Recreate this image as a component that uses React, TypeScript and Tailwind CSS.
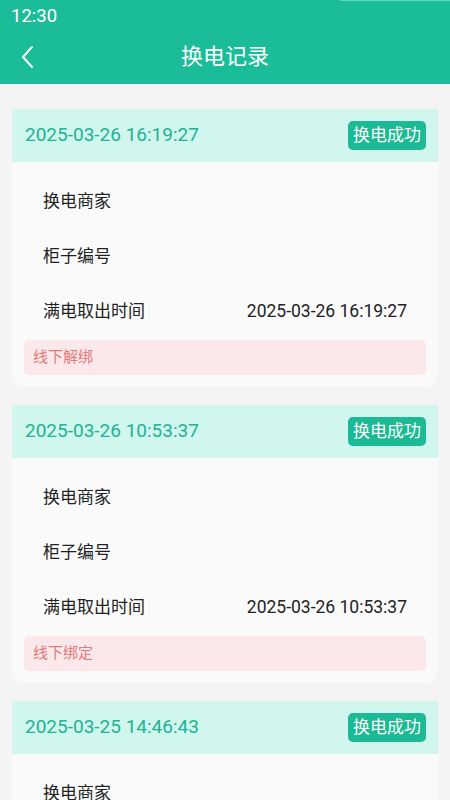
import React from "react";

interface RecordItem {
  time: string;
  status: string;
  merchant: string;
  cabinet: string;
  takeOut: string;
  note: string;
}

const records: RecordItem[] = [
  {
    time: "2025-03-26 16:19:27",
    status: "换电成功",
    merchant: "",
    cabinet: "",
    takeOut: "2025-03-26 16:19:27",
    note: "线下解绑",
  },
  {
    time: "2025-03-26 10:53:37",
    status: "换电成功",
    merchant: "",
    cabinet: "",
    takeOut: "2025-03-26 10:53:37",
    note: "线下绑定",
  },
  {
    time: "2025-03-25 14:46:43",
    status: "换电成功",
    merchant: "",
    cabinet: "",
    takeOut: "2025-03-25 14:46:43",
    note: "线下解绑",
  },
];

const Row: React.FC<{ label: string; value?: string }> = ({ label, value }) => (
  <div className="h-[55px] flex items-center justify-between pl-[31px] pr-[31px] text-[17px] text-[#222]">
    <span>{label}</span>
    <span className="text-[17.5px]">{value}</span>
  </div>
);

const RecordCard: React.FC<{ item: RecordItem }> = ({ item }) => (
  <div className="bg-[#fafafa] rounded-b-[12px] overflow-hidden">
    {/* Header band */}
    <div className="h-[53px] bg-[#d1f6ed] flex items-center justify-between pl-[13px] pr-[12px]">
      <span className="text-[19px] text-[#22b294]">{item.time}</span>
      <span className="h-[29px] px-[5px] rounded-[5px] bg-[#1bb994] text-white text-[17px] flex items-center">
        {item.status}
      </span>
    </div>

    {/* Body */}
    <div className="pt-[12px] pb-[12px]">
      <Row label="换电商家" value={item.merchant} />
      <Row label="柜子编号" value={item.cabinet} />
      <Row label="满电取出时间" value={item.takeOut} />
      <div className="mt-[1px] mx-[12px] h-[35px] rounded-[5px] bg-[#fbe8ea] flex items-center px-[9px] text-[15px] text-[#e07a7c]">
        {item.note}
      </div>
    </div>
  </div>
);

export default function App() {
  return (
    <div
      className="w-[450px] h-[800px] overflow-hidden bg-[#f4f4f4]"
      style={{ fontFamily: '"Roboto", "Noto Sans CJK SC", sans-serif' }}
    >
      {/* Top bar */}
      <div className="bg-[#1bbc98] text-white relative">
        <div className="absolute top-0 right-0 w-[110px] h-[1px] bg-[#5fd6bb]" />
        <div className="h-[30px] flex items-center pl-[11px] pt-[3px] text-[18.5px]">12:30</div>
        <div className="h-[54px] relative flex items-center justify-center">
          <button className="absolute left-[18px] top-[14px] w-[18px] h-[26px] flex items-center justify-center">
            <svg width="14" height="24" viewBox="0 0 14 24" fill="none">
              <path d="M12 2 L3 12 L12 22" stroke="white" strokeWidth="2" strokeLinecap="round" strokeLinejoin="round" />
            </svg>
          </button>
          <h1 className="text-[22px] font-normal -mt-[2px]">换电记录</h1>
        </div>
      </div>

      {/* List */}
      <div className="pt-[25px] px-[12px] flex flex-col gap-[18px]">
        {records.map((r, i) => (
          <RecordCard key={i} item={r} />
        ))}
      </div>
    </div>
  );
}
